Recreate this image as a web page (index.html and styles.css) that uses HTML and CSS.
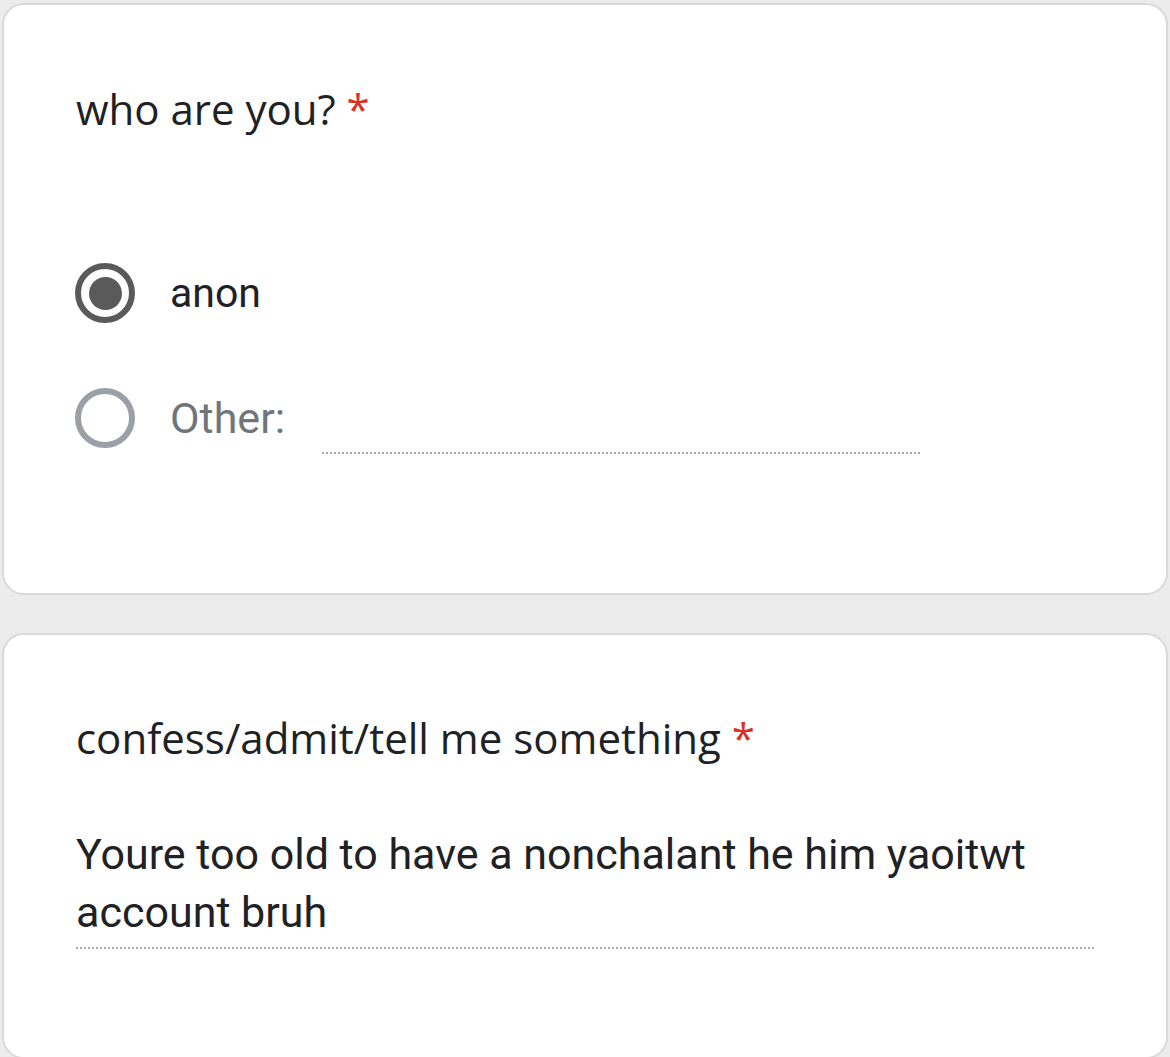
FILE: index.html
```html
<!DOCTYPE html>
<html lang="en">
<head>
<meta charset="utf-8">
<title>Form</title>
<link rel="stylesheet" href="styles.css">
</head>
<body>
<main class="page">
  <section class="card card-first">
    <h2 class="question">who are you? <span class="req">*</span></h2>
    <div class="options">
      <div class="option">
        <span class="radio radio-on"><span class="dot"></span></span>
        <span class="label">anon</span>
      </div>
      <div class="option option-other">
        <span class="radio"></span>
        <span class="label label-muted">Other:</span>
        <span class="other-field"></span>
      </div>
    </div>
  </section>
  <section class="card card-second">
    <h2 class="question">confess/admit/tell me something <span class="req">*</span></h2>
    <div class="answer">Youre too old to have a nonchalant he him yaoitwt account bruh</div>
  </section>
</main>
</body>
</html>
```
FILE: styles.css
```css
* { box-sizing: border-box; }
html, body { margin: 0; padding: 0; }
body {
  background: #ececec;
  width: 1170px;
  height: 1057px;
  overflow: hidden;
}
.page {
  display: flex;
  flex-direction: column;
  gap: 38px;
  padding: 3px 2px 0 2px;
}
.card {
  background: #ffffff;
  border: 2px solid #d9d9d9;
  border-radius: 22px;
  padding-left: 72px;
  padding-right: 71px;
}
.card-first {
  height: 592px;
  padding-top: 78px;
}
.card-second {
  height: 426px;
  padding-top: 77px;
}
.question {
  margin: 0;
  font-family: "Open Sans", "Noto Sans", sans-serif;
  font-weight: 400;
  font-size: 42px;
  line-height: 52px;
  color: #202124;
}
.req { color: #d93025; }
.options {
  display: flex;
  flex-direction: column;
  margin-top: 128px;
  gap: 59px;
}
.option {
  display: flex;
  align-items: center;
  height: 60px;
}
.option-other { height: 72px; }
.radio {
  width: 60px;
  height: 60px;
  margin-left: -1px;
  border-radius: 50%;
  border: 6px solid #9aa0a6;
  display: flex;
  align-items: center;
  justify-content: center;
  flex: none;
}
.radio-on { border-color: #5a5a5a; }
.dot {
  width: 33px;
  height: 33px;
  border-radius: 50%;
  background: #5a5a5a;
}
.label {
  margin-left: 35px;
  font-family: Roboto, "Liberation Sans", sans-serif;
  font-size: 41px;
  color: #202124;
}
.label-muted { color: #70757a; font-size: 43px; }
.other-field {
  margin-left: 37px;
  width: 600px;
  height: 72px;
  background-image: linear-gradient(to right, #a8a8a8 50%, transparent 50%);
  background-size: 4px 2px;
  background-repeat: repeat-x;
  background-position: left bottom;
}
.answer {
  margin-top: 61px;
  font-family: Roboto, "Liberation Sans", sans-serif;
  font-size: 43px;
  line-height: 58px;
  color: #202124;
  background-image: linear-gradient(to right, #a8a8a8 50%, transparent 50%);
  background-size: 4px 2px;
  background-repeat: repeat-x;
  background-position: left bottom;
  padding-bottom: 8px;
}
```
